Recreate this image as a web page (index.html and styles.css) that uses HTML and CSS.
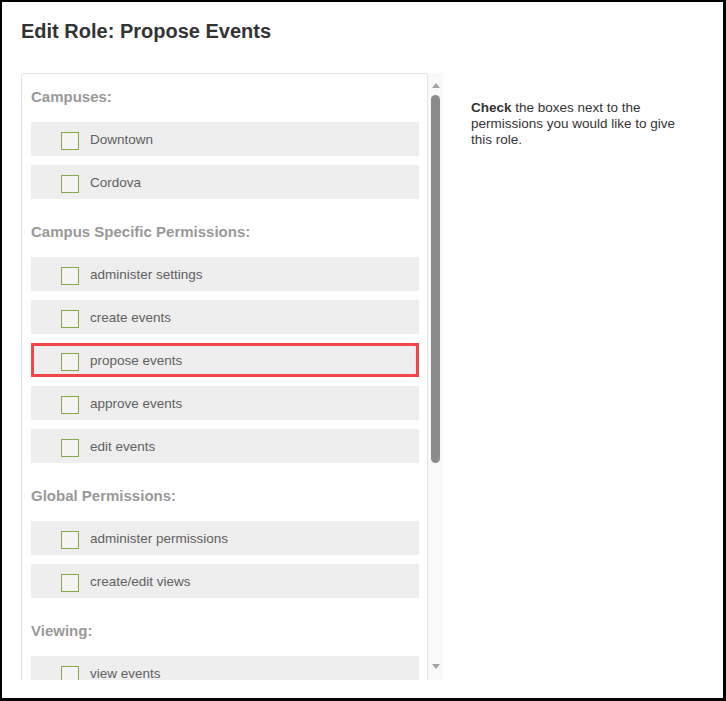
FILE: index.html
```html
<!DOCTYPE html>
<html lang="en">
<head>
<meta charset="utf-8">
<title>Edit Role: Propose Events</title>
<link rel="stylesheet" href="styles.css">
</head>
<body>
<div class="frame">
  <h1 class="title">Edit Role: Propose Events</h1>
  <div class="main">
    <div class="scroller">
      <div class="viewport">
        <div class="panel">
          <h2 class="group-title first">Campuses:</h2>
          <div class="row"><span class="box"></span><span class="label">Downtown</span></div>
          <div class="row"><span class="box"></span><span class="label">Cordova</span></div>

          <h2 class="group-title">Campus Specific Permissions:</h2>
          <div class="row"><span class="box"></span><span class="label">administer settings</span></div>
          <div class="row"><span class="box"></span><span class="label">create events</span></div>
          <div class="row highlight"><span class="box"></span><span class="label">propose events</span></div>
          <div class="row"><span class="box"></span><span class="label">approve events</span></div>
          <div class="row"><span class="box"></span><span class="label">edit events</span></div>

          <h2 class="group-title">Global Permissions:</h2>
          <div class="row"><span class="box"></span><span class="label">administer permissions</span></div>
          <div class="row"><span class="box"></span><span class="label">create/edit views</span></div>

          <h2 class="group-title">Viewing:</h2>
          <div class="row"><span class="box"></span><span class="label">view events</span></div>
        </div>
      </div>
      <div class="scrollbar">
        <span class="arrow-up"></span>
        <span class="thumb"></span>
        <span class="spacer"></span>
        <span class="arrow-down"></span>
      </div>
    </div>
    <p class="info"><strong>Check</strong> the boxes next to the permissions you would like to give this role.</p>
  </div>
</div>
</body>
</html>
```
FILE: styles.css
```css
* { box-sizing: border-box; }

html, body {
  margin: 0;
  padding: 0;
  background: #fff;
}

body {
  font-family: "Liberation Sans", Arial, sans-serif;
}

.frame {
  width: 726px;
  height: 701px;
  border-style: solid;
  border-color: #000;
  border-width: 2px 3px 3px 2px;
  padding-left: 19px;
  overflow: hidden;
}

.title {
  margin: 18px 0 0;
  font-size: 20px;
  line-height: 23px;
  font-weight: bold;
  color: #333;
}

.main {
  display: flex;
  align-items: flex-start;
  margin-top: 30px;
}

.scroller {
  display: flex;
  width: 422px;
  height: 607px;
}

.viewport {
  flex: 1;
  height: 607px;
  overflow: hidden;
}

.panel {
  border: 1px solid #e4e4e4;
  border-radius: 3px;
  padding: 14px 8px 20px 9px;
}

.group-title {
  margin: 24px 0 17px;
  font-size: 15px;
  line-height: 17px;
  font-weight: bold;
  color: #999;
}

.group-title.first {
  margin-top: 0;
}

.row {
  display: flex;
  align-items: center;
  height: 34px;
  margin-bottom: 9px;
  padding-left: 30px;
  background: #eeeeee;
}

.row.highlight {
  box-shadow: inset 0 0 0 3px #f24747;
}

.box {
  width: 18px;
  height: 18px;
  margin-top: 4px;
  border: 1px solid #86a947;
  background: #f4f4f4;
  flex: none;
}

.label {
  margin-left: 11px;
  font-size: 13.5px;
  color: #606060;
}

.scrollbar {
  width: 15px;
  height: 607px;
  background: #f9f9f9;
  display: flex;
  flex-direction: column;
  align-items: center;
}

.arrow-up {
  margin-top: 10px;
  width: 0;
  height: 0;
  border-left: 4.5px solid transparent;
  border-right: 4.5px solid transparent;
  border-bottom: 5px solid #a3a3a3;
}

.thumb {
  margin-top: 7px;
  width: 9px;
  height: 368px;
  border-radius: 5px;
  background: #8b8b8b;
}

.spacer {
  flex: 1;
}

.arrow-down {
  margin-bottom: 11px;
  width: 0;
  height: 0;
  border-left: 4.5px solid transparent;
  border-right: 4.5px solid transparent;
  border-top: 5px solid #a3a3a3;
}

.info {
  width: 218px;
  margin: 27px 0 0 28px;
  font-size: 13.5px;
  line-height: 16px;
  color: #333;
}

.info strong {
  font-weight: bold;
}
```
